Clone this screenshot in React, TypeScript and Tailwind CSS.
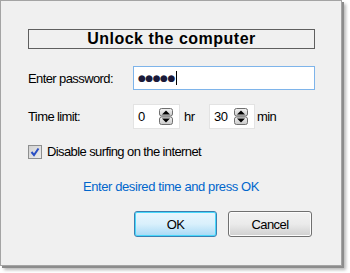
import React from 'react';

const label = "font-['Liberation_Sans',Arial,sans-serif] text-[13px] tracking-[-0.6px] text-black leading-none";

const Spinner: React.FC = () => (
  <svg width="14" height="17" viewBox="0 0 14 17" className="shrink-0">
    <defs>
      <linearGradient id="sp" x1="0" y1="0" x2="0" y2="1">
        <stop offset="0" stopColor="#f4f4f4" />
        <stop offset="1" stopColor="#c8c8c8" />
      </linearGradient>
    </defs>
    <rect x="0.5" y="0.5" width="13" height="7.5" rx="2" fill="url(#sp)" stroke="#6f6f6f" />
    <rect x="0.5" y="9" width="13" height="7.5" rx="2" fill="url(#sp)" stroke="#6f6f6f" />
    <path d="M3 6.5 L7 2.5 L11 6.5 Z" fill="#000" />
    <path d="M3 10.5 L7 14.5 L11 10.5 Z" fill="#000" />
  </svg>
);

const SpinBox: React.FC<{ value: string; width: string }> = ({ value, width }) => (
  <div className={`${width} h-[25px] bg-white border border-[#e3e3e3] flex items-center pl-[4px] pr-[6px] justify-between`}>
    <span className={label}>{value}</span>
    <Spinner />
  </div>
);

export default function App() {
  return (
    <div className="w-[350px] h-[273px] bg-white overflow-hidden">
      <div className="w-[342px] h-[266px] bg-[#f0f0f0] border border-[#a4a4a4] shadow-[2px_2px_0_#8c8c8c,4px_4px_3px_rgba(0,0,0,0.28)] flex flex-col pl-[27px] pr-[26px]">
        <div className="mt-[28px] h-[20px] border border-[#5f5f5f] flex items-center justify-center">
          <span className="font-['Liberation_Sans',Arial,sans-serif] font-bold text-[16px] tracking-[0.5px] leading-none text-black">
            Unlock the computer
          </span>
        </div>

        <div className="mt-[17px] flex items-center h-[24px]">
          <span className={`${label} w-[105px]`}>Enter password:</span>
          <div className="flex-1 h-[24px] bg-white border border-[#7eb4ea] flex items-center pl-[4px]">
            <span className="text-[#1a1a3a] text-[9px] tracking-[-0.5px] leading-none font-['DejaVu_Sans',sans-serif]">●●●●●</span>
            <span className="w-px h-[14px] bg-black ml-[1px]" />
          </div>
        </div>

        <div className="mt-[14px] flex items-center h-[25px]">
          <span className={`${label} w-[105px]`}>Time limit:</span>
          <SpinBox value="0" width="w-[47px]" />
          <span className={`${label} ml-[4px] w-[25px]`}>hr</span>
          <SpinBox value="30" width="w-[46px]" />
          <span className={`${label} ml-[2px]`}>min</span>
        </div>

        <div className="mt-[16px] flex items-center h-[13px]">
          <div className="w-[14px] h-[14px] border border-[#8e8f8f] bg-gradient-to-br from-[#d2d2d2] to-[#ececec] flex items-center justify-center">
            <svg width="10" height="10" viewBox="0 0 10 10">
              <path d="M1.5 5 L4 8 L8.5 1.5" fill="none" stroke="#2a4fc4" strokeWidth="2" />
            </svg>
          </div>
          <span className={`${label} ml-[5px]`}>Disable surfing on the internet</span>
        </div>

        <div className="mt-[22px] flex justify-center -ml-[27px] -mr-[26px]">
          <span className="font-['Liberation_Sans',Arial,sans-serif] text-[13px] tracking-[-0.4px] leading-none text-[#0066cc]">
            Enter desired time and press OK
          </span>
        </div>

        <div className="mt-[18px] flex justify-end gap-[11px] pr-[3px]">
          <button className="w-[83px] h-[26px] rounded-[3px] border border-[#3c7fb1] bg-gradient-to-b from-[#eaf6fd] via-[#d9f0fc] to-[#a7d9f5] shadow-[inset_0_0_0_1px_#48d8fb] flex items-center justify-center">
            <span className={label}>OK</span>
          </button>
          <button className="w-[84px] h-[26px] rounded-[3px] border border-[#707070] bg-gradient-to-b from-[#f2f2f2] via-[#ebebeb] to-[#cfcfcf] shadow-[inset_0_0_0_1px_#fcfcfc] flex items-center justify-center">
            <span className={label}>Cancel</span>
          </button>
        </div>
      </div>
    </div>
  );
}
